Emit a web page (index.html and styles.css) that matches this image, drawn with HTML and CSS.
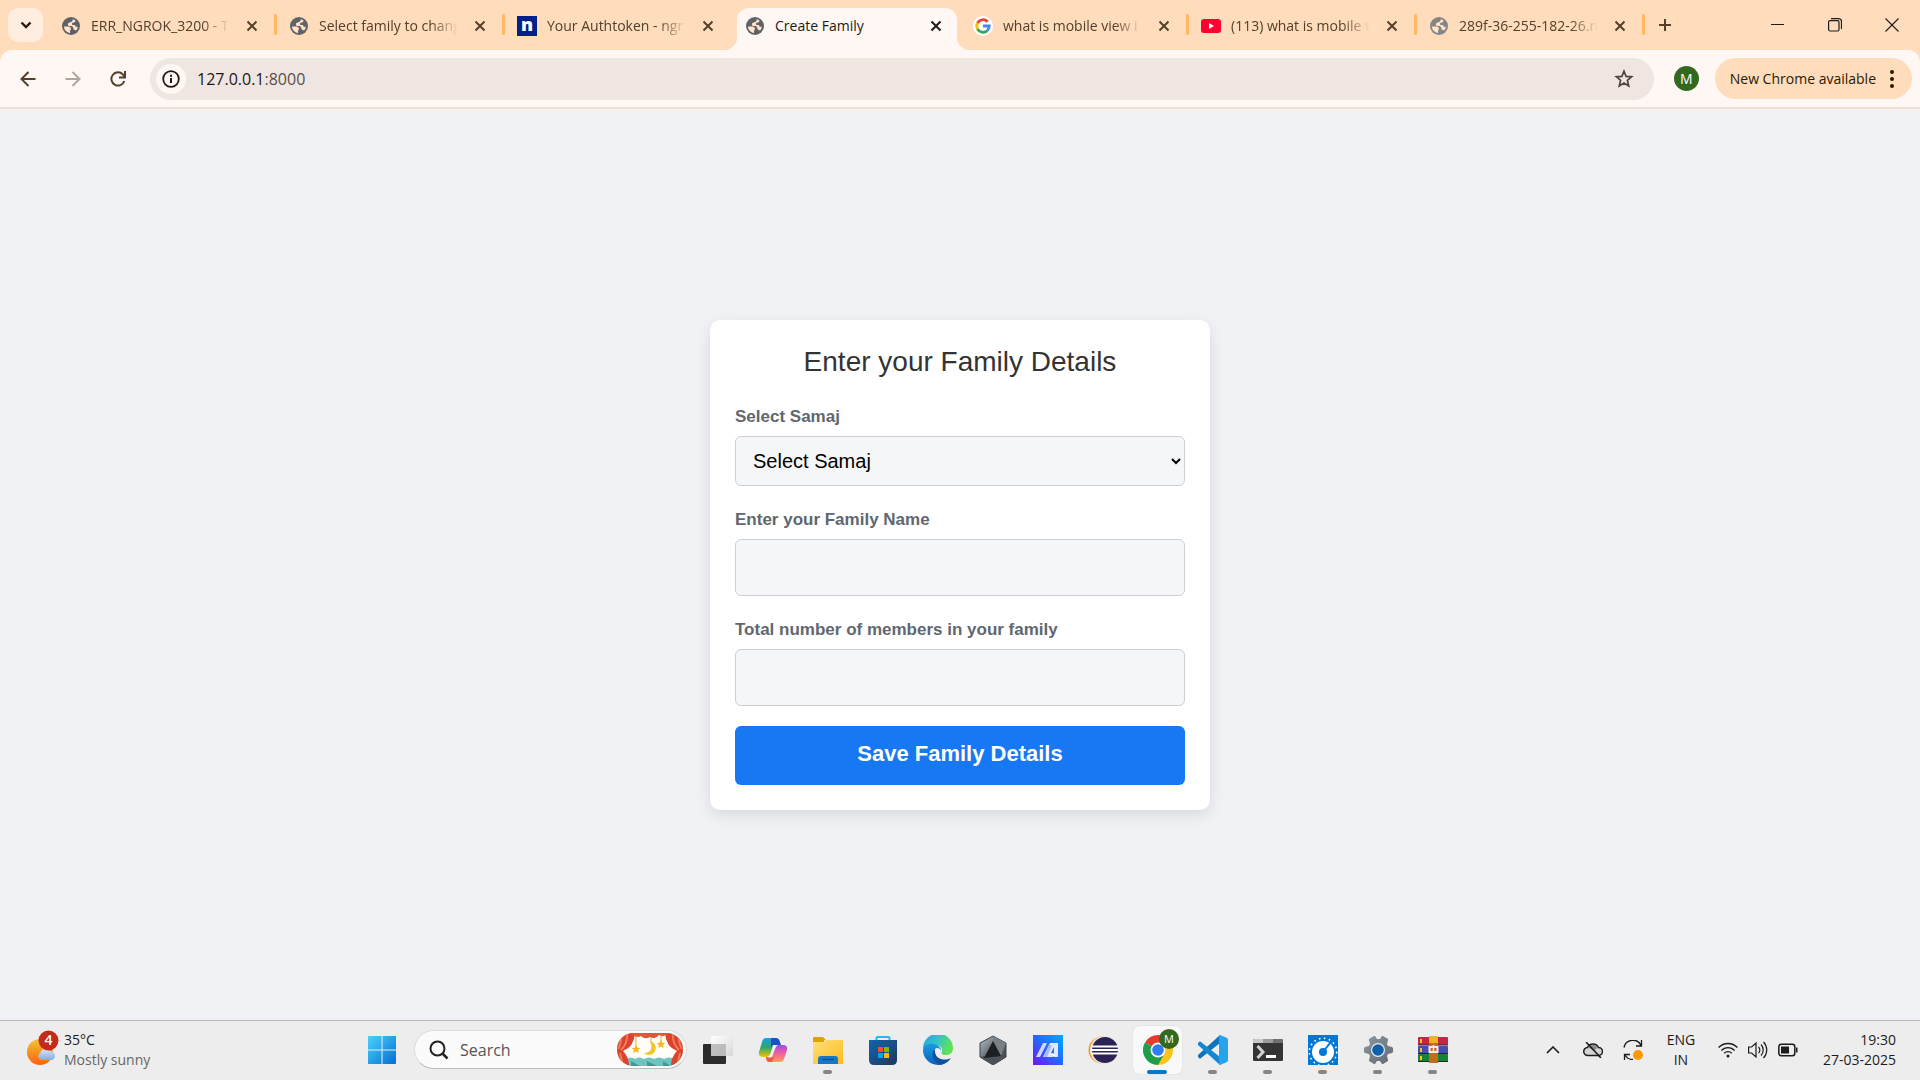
FILE: index.html
```html
<!DOCTYPE html>
<html lang="en">
<head>
<meta charset="utf-8">
<meta name="viewport" content="width=device-width, initial-scale=1">
<title>Create Family</title>
<link rel="stylesheet" href="styles.css">
</head>
<body>
<svg class="defs" aria-hidden="true">
  <defs>
    <symbol id="globe" viewBox="0 0 18 18">
      <circle cx="9" cy="9" r="9" fill="currentColor"/>
      <path class="sea" d="M2 9.6h4.400c1.600 0 2.500 1 2.500 2.400 0 .9-.9 1.200-.9 2.200V16C4.700 15.600 2.100 13 2 9.600zM10.800 2.200c1 .3 1.900.7 2.700 1.400-.2 1.400-1 2.100-2.400 2.100-.9 0-1.100.6-1.100 1.200 0 .8.500 1.200 1.500 1.200 1.600 0 2 .7 2.200 1.700h2.100c-.1 1.300-.5 2.400-1.200 3.300-1.600.2-2.900-.3-3.200-1.700-.3-1.800-1.200-2.300-3-2.300-1.700 0-2.500-.6-2.500-1.700 0-1.300.7-1.800 1.900-2C9.600 5 10.800 4.200 10.800 2.200z"/>
    </symbol>
    <symbol id="x" viewBox="0 0 12 12"><path d="M1.500 1.500l9 9M10.500 1.500l-9 9" fill="none" stroke="currentColor" stroke-width="2"/></symbol>
    <linearGradient id="win" x1="0" y1="0" x2="1" y2="1"><stop offset="0" stop-color="#4fd0fd"/><stop offset="1" stop-color="#0070d2"/></linearGradient>
    <linearGradient id="cpL" x1="0" y1="0" x2="0" y2="1"><stop offset="0" stop-color="#1aa0e8"/><stop offset=".5" stop-color="#2fa66a"/><stop offset="1" stop-color="#f4c400"/></linearGradient>
    <linearGradient id="cpR" x1="0" y1="0" x2="0" y2="1"><stop offset="0" stop-color="#a24be8"/><stop offset=".5" stop-color="#f0609a"/><stop offset="1" stop-color="#fba25a"/></linearGradient>
    <linearGradient id="fold" x1="0" y1="0" x2="1" y2="1"><stop offset="0" stop-color="#ffe07a"/><stop offset="1" stop-color="#fdbb1e"/></linearGradient>
    <linearGradient id="store" x1="0" y1="0" x2="1" y2="1"><stop offset="0" stop-color="#0f66ae"/><stop offset="1" stop-color="#22355f"/></linearGradient>
    <linearGradient id="edgeA" x1="0" y1="0" x2="1" y2=".4"><stop offset="0" stop-color="#1ba4e0"/><stop offset=".5" stop-color="#2fc4c8"/><stop offset="1" stop-color="#63e05a"/></linearGradient>
    <linearGradient id="edgeB" x1="0" y1="0" x2="0" y2="1"><stop offset="0" stop-color="#1a9be0"/><stop offset="1" stop-color="#0b60bd"/></linearGradient>
    <linearGradient id="hex" x1="0" y1="0" x2="1" y2="1"><stop offset="0" stop-color="#b8c2ca"/><stop offset=".5" stop-color="#5d656c"/><stop offset="1" stop-color="#3a3f44"/></linearGradient>
    <linearGradient id="asus" x1="1" y1="0" x2="0" y2="1"><stop offset="0" stop-color="#05a8ff"/><stop offset=".5" stop-color="#2567ff"/><stop offset="1" stop-color="#7313f5"/></linearGradient>
    <linearGradient id="sun" x1="0" y1="0" x2="0" y2="1"><stop offset="0" stop-color="#f3c433"/><stop offset="1" stop-color="#f5630f"/></linearGradient>
    <linearGradient id="cloud" x1="0" y1="0" x2="0" y2="1"><stop offset="0" stop-color="#d8e8fb"/><stop offset="1" stop-color="#86abe6"/></linearGradient>
    <linearGradient id="gearG" x1="0" y1="0" x2="1" y2="1"><stop offset="0" stop-color="#8d979f"/><stop offset="1" stop-color="#616a72"/></linearGradient>
    <linearGradient id="pane" x1="0" y1="0" x2="1" y2="1"><stop offset="0" stop-color="#fff"/><stop offset="1" stop-color="#d8d8d8"/></linearGradient>
    <clipPath id="pill"><rect width="66" height="33" rx="16"/></clipPath>
  </defs>
</svg>

<header class="browser">
  <div class="tabstrip">
    <button class="tab-search" aria-label="Search tabs"><svg width="12" height="8" viewBox="0 0 12 8"><path d="M1.500 1.500L6 6l4.500-4.500" fill="none" stroke="currentColor" stroke-width="2.400"/></svg></button>
    <nav class="tabs">
      <div class="tab"><span class="fav"><svg width="18" height="18"><use href="#globe"/></svg></span><a href="#" class="tab-title">ERR_NGROK_3200 - T</a><button class="tab-close" aria-label="Close"><svg width="12" height="12"><use href="#x"/></svg></button></div>
      <div class="tab"><span class="fav"><svg width="18" height="18"><use href="#globe"/></svg></span><a href="#" class="tab-title">Select family to chang</a><button class="tab-close" aria-label="Close"><svg width="12" height="12"><use href="#x"/></svg></button></div>
      <div class="tab no-line"><span class="fav fav-n">n</span><a href="#" class="tab-title">Your Authtoken - ngr</a><button class="tab-close" aria-label="Close"><svg width="12" height="12"><use href="#x"/></svg></button></div>
      <div class="tab active"><span class="fav"><svg width="18" height="18"><use href="#globe"/></svg></span><a href="#" class="tab-title">Create Family</a><button class="tab-close" aria-label="Close"><svg width="12" height="12"><use href="#x"/></svg></button></div>
      <div class="tab"><span class="fav"><svg width="20" height="20" viewBox="0 0 20 20"><circle cx="10" cy="10" r="10" fill="#fff"/><g fill="none" stroke-width="2.800"><path d="M14.600 5.700A6.300 6.300 0 0 0 4.500 7" stroke="#ea4335"/><path d="M4.500 7a6.300 6.300 0 0 0 0 6" stroke="#fbbc05"/><path d="M4.500 13a6.300 6.300 0 0 0 9.800 1.600" stroke="#34a853"/><path d="M14.300 14.600A6.300 6.300 0 0 0 16.200 10H10" stroke="#4285f4"/></g></svg></span><a href="#" class="tab-title">what is mobile view i</a><button class="tab-close" aria-label="Close"><svg width="12" height="12"><use href="#x"/></svg></button></div>
      <div class="tab"><span class="fav"><svg width="20" height="14" viewBox="0 0 20 14"><rect width="20" height="14" rx="3" fill="#ff0033"/><path d="M8 4l5 3-5 3z" fill="#fff"/></svg></span><a href="#" class="tab-title">(113) what is mobile v</a><button class="tab-close" aria-label="Close"><svg width="12" height="12"><use href="#x"/></svg></button></div>
      <div class="tab"><span class="fav faded"><svg width="18" height="18"><use href="#globe"/></svg></span><a href="#" class="tab-title">289f-36-255-182-26.n</a><button class="tab-close" aria-label="Close"><svg width="12" height="12"><use href="#x"/></svg></button></div>
    </nav>
    <button class="new-tab" aria-label="New tab"><svg width="14" height="14" viewBox="0 0 14 14"><path d="M7 1v12M1 7h12" stroke="currentColor" stroke-width="2"/></svg></button>
    <div class="window-controls">
      <button aria-label="Minimize"><svg width="14" height="14" viewBox="0 0 14 14"><path d="M0 6.500h13" stroke="currentColor"/></svg></button>
      <button aria-label="Restore"><svg width="14" height="14" viewBox="0 0 14 14" fill="none" stroke="currentColor" stroke-width="1.200"><rect x=".6" y="2.600" width="10.400" height="10.400" rx="1.500"/><path d="M3 .6h7.500a3 3 0 0 1 3 3V11"/></svg></button>
      <button aria-label="Close window"><svg width="14" height="14" viewBox="0 0 14 14"><path d="M.5.5l13 13M13.500.5l-13 13" stroke="currentColor" stroke-width="1.100"/></svg></button>
    </div>
  </div>

  <div class="toolbar">
    <button class="nav-btn" aria-label="Back"><svg width="16" height="16" viewBox="0 0 16 16"><path d="M15.500 8H2M8.500 1L1.500 8l7 7" fill="none" stroke="currentColor" stroke-width="2"/></svg></button>
    <button class="nav-btn dim" aria-label="Forward"><svg width="16" height="16" viewBox="0 0 16 16"><path d="M.5 8H14M7.500 1l7 7-7 7" fill="none" stroke="currentColor" stroke-width="2"/></svg></button>
    <button class="nav-btn" aria-label="Reload"><svg width="16" height="16" viewBox="0 0 16 16"><path d="M14.300 10A6.600 6.600 0 1 1 12.800 3.400L14.500 5.500" fill="none" stroke="currentColor" stroke-width="2"/><path d="M15 0v6.500H9" fill="none" stroke="currentColor" stroke-width="2"/></svg></button>
    <div class="omnibox">
      <button class="site-info" aria-label="Site information"><svg width="18" height="18" viewBox="0 0 18 18"><circle cx="9" cy="9" r="7.800" fill="none" stroke="currentColor" stroke-width="1.800"/><path d="M9 8v5M9 4.800v2" stroke="currentColor" stroke-width="2"/></svg></button>
      <a class="url" href="#">127.0.0.1<span class="port">:8000</span></a>
      <button class="star" aria-label="Bookmark"><svg width="20" height="20" viewBox="0 0 20 20"><path d="M10 2.200l2.100 5.200 5.500.4-4.200 3.600 1.300 5.500L10 14l-4.700 2.900 1.300-5.500-4.200-3.600 5.500-.4z" fill="none" stroke="currentColor" stroke-width="1.700"/></svg></button>
    </div>
    <button class="avatar" aria-label="Profile">M</button>
    <button class="update">New Chrome available<svg width="4" height="18" viewBox="0 0 4 18" fill="currentColor"><circle cx="2" cy="2" r="2"/><circle cx="2" cy="9" r="2"/><circle cx="2" cy="16" r="2"/></svg></button>
  </div>
</header>

<main class="page">
  <form class="card">
    <h1>Enter your Family Details</h1>
    <label for="samaj">Select Samaj</label>
    <select id="samaj"><option>Select Samaj</option></select>
    <label for="family">Enter your Family Name</label>
    <input id="family" type="text">
    <label for="members">Total number of members in your family</label>
    <input id="members" type="text">
    <button class="save" type="button">Save Family Details</button>
  </form>
</main>

<footer class="taskbar">
  <button class="weather">
    <svg width="32" height="36" viewBox="0 0 32 36"><circle cx="13" cy="22" r="13" fill="url(#sun)"/><path d="M14 30a4 4 0 0 1-.3-7.500 5 5 0 0 1 9.300-1.200 4.500 4.500 0 0 1 2 8.700z" fill="url(#cloud)"/><circle cx="21.500" cy="10.500" r="10" fill="#c42b1c"/><text x="21.500" y="15" text-anchor="middle" class="badge-text">4</text></svg>
    <span class="weather-text"><span>35°C</span><span class="muted">Mostly sunny</span></span>
  </button>

  <div class="apps">
    <button class="app" aria-label="Start"><svg width="30" height="30" viewBox="0 0 30 30" fill="url(#win)"><path d="M2 1h27v27a1 1 0 0 1-1 1H1V2a1 1 0 0 1 1-1z"/><path d="M15 0v30M0 15h30" stroke="#ededed"/></svg></button>
    <label class="search">
      <svg width="20" height="20" viewBox="0 0 20 20"><circle cx="8.500" cy="8.500" r="7" fill="none" stroke="#222" stroke-width="2"/><path d="M13.500 13.500l5 5" stroke="#222" stroke-width="2.500"/></svg>
      <input type="text" placeholder="Search" aria-label="Search">
      <svg width="66" height="33" viewBox="0 0 66 33"><g clip-path="url(#pill)"><rect width="66" height="33" fill="#fffdf8"/><path d="M10 26q4-3 8 0 4-3 9 0 5-3 10 0 5-3 10 0 5-3 11 0v8H10z" fill="#6fc4bd"/><path d="M14 28l9 5h-9zM30 28l10 5H30zM46 28l8 5h-8z" fill="#3d9b99"/><path d="M0 0h18Q17 14 6 18q6 6 6 15H0zM66 0H48q1 14 12 18-6 6-6 15h12z" fill="#d9432f"/><path d="M4 0Q5 10 1 16M10 0Q11 10 4 17M3 20l3 13M62 0q-1 10 3 16M56 0q-1 10 6 17M63 20l-3 13" fill="none" stroke="#f37a58" stroke-width="2"/><path d="M14 0h38q-5 5-10 2-4 5-9 2-5 3-9-1-5 3-10-3z" fill="#e5553a"/><path d="M19 3v13M34 4v6M44 3v8" stroke="#e0b040"/><path d="M33 8a7 7 0 1 1-6 12c8 0 9-6 6-12z" fill="#f6c324"/><path d="M19 12l1.300 2.700 3 .4-2.200 2 .6 3-2.700-1.500-2.700 1.500.6-3-2.200-2 3-.4zM44 7l1.300 2.700 3 .4-2.200 2 .6 3-2.700-1.500-2.700 1.500.6-3-2.200-2 3-.4z" fill="#f6b91d"/></g></svg>
    </label>
    <button class="app" aria-label="Task view"><svg width="30" height="30" viewBox="0 0 30 30"><rect y="9" width="23" height="20" rx="1" fill="#2c2c2c"/><rect x="8" y="1" width="22" height="20" rx="1" fill="url(#pane)"/><path d="M8 9h15v12H8z" fill="#a9a9a9" opacity=".7"/></svg></button>
    <button class="app" aria-label="Copilot"><svg width="30" height="30" viewBox="0 0 30 30"><path d="M8 3h11l-5 14q-1 5-5 5H5q-5 0-4-5L4 7q1-4 4-4z" fill="url(#cpL)"/><path d="M13 3h5q3 0 4 4l1 3h-6q-3 0-4 3z" fill="#1e50c8"/><path d="M20 10h5q5 0 4 5l-3 9q-1 3-4 3H11l5-13q1-4 4-4z" fill="url(#cpR)"/><path d="M8 22h8l-2 5h-3q-3 0-3-5z" fill="#ee5a42"/><path d="M15 10h5q-2 1-3 4l-3 8q-2 1-5 0 3-1 4-5z" fill="#f0eff2"/></svg></button>
    <button class="app running" aria-label="File Explorer"><svg width="30" height="30" viewBox="0 0 30 30"><path d="M0 3q0-1 1-1h9l3 3h-2v3H0z" fill="#e0a000"/><path d="M0 7h10l3-2h17v24H0z" fill="url(#fold)"/><path d="M5 29v-5q0-3 3-3h14q3 0 3 3v5z" fill="#1878c8"/><path d="M9 24.500h12" stroke="#0c4f96" stroke-width="1.500"/></svg></button>
    <button class="app" aria-label="Store"><svg width="30" height="30" viewBox="0 0 30 30"><path d="M8.500 7V3q0-1 1-1h11q1 0 1 1v4" fill="none" stroke="#27b8f2" stroke-width="2"/><path d="M1 5h28v20q0 5-5 5H6q-5 0-5-5z" fill="url(#store)"/><path d="M10 12h5v5h-5z" fill="#f25022"/><path d="M16 12h5v5h-5z" fill="#7fba00"/><path d="M10 18h5v5h-5z" fill="#00a4ef"/><path d="M16 18h5v5h-5z" fill="#ffb900"/></svg></button>
    <button class="app" aria-label="Edge"><svg width="30" height="30" viewBox="0 0 30 30"><path d="M0 14A15 15 0 0 1 30 13c0 5-3 7-7 7-3 0-5-1-4.500-2.500 1.500-2 .5-7-5.500-7.500C7 9 1 11 0 14z" fill="url(#edgeA)"/><path d="M0 15C0 10 6 8 11 9c5 1 7 4 7 7-1-3-4-4-6-2-4 5 1 13 8 12 3 0 5-1 7-2-3 4-7 6-12 6A15 15 0 0 1 0 15z" fill="url(#edgeB)"/><path d="M11.500 14C7 20 11 28 18 29.700 22 29 26 26 28 23c-6 3-15 2-16-6 0-1 0-2-.5-3z" fill="#11519c"/></svg></button>
    <button class="app" aria-label="Armoury"><svg width="30" height="30" viewBox="0 0 30 30"><path d="M15 1l13 7v14l-13 8-13-8V8z" fill="url(#hex)" stroke="#3c4246"/><path d="M2 22l4-1 17 0 5 1-13 8z" fill="#4c5257"/><path d="M15 6l8 15 5-13-13-7z" fill="#787f85"/><path d="M15 6l8 15-17 2z" fill="#1d2023"/></svg></button>
    <button class="app" aria-label="MyASUS"><svg width="30" height="30" viewBox="0 0 30 30"><path d="M0 0h30v30H0z" fill="url(#asus)"/><path d="M3 22l7-14h4L7 22z" fill="#cfd9ff"/><path d="M10 22l7-14h8v14h-4V12l-3 6h2v4z" fill="#f2f5ff" opacity=".9"/><path d="M10 22l6-12h3l-5 12z" fill="#aab8ff"/><circle cx="20.500" cy="20" r="1.500" fill="#fff"/></svg></button>
    <button class="app" aria-label="Eclipse"><svg width="30" height="30" viewBox="0 0 30 30"><circle cx="14" cy="15" r="13.500" fill="#f7941e"/><circle cx="16" cy="15" r="14" fill="#f3e7d8"/><circle cx="17" cy="15" r="13" fill="#2c2255"/><path d="M4 11.500h26M3 15h27M4 18.500h26" stroke="#fff" stroke-width="1.800"/></svg></button>
    <button class="app current" aria-label="Chrome"><svg width="36" height="36" viewBox="0 0 36 36"><path d="M15 21L2 13.500A15 15 0 0 1 28 13.500z" fill="#e33b2e"/><path d="M15 21L28 13.500A15 15 0 0 1 15 36z" fill="#fcc31e"/><path d="M15 21l5 6.500-5 8.500A15 15 0 0 1 2 13.500z" fill="#1e9e4a"/><circle cx="15" cy="21" r="7.500" fill="#fff"/><circle cx="15" cy="21" r="5.800" fill="#2f7cf0"/><circle cx="26" cy="10" r="10" fill="#33691e"/><text x="26" y="14" text-anchor="middle" class="badge-m">M</text></svg></button>
    <button class="app running" aria-label="VS Code"><svg width="30" height="30" viewBox="0 0 30 30"><path d="M22 0v8L3 23q-1 1-2 0l-1-1q-1-1 0-2z" fill="#0d74bd"/><path d="M22 30v-8L3 7Q2 6 1 7L0 8q-1 1 0 2z" fill="#1587d2"/><path d="M22 0l7 3q1 .500 1 2v20q0 1.500-1 2l-7 3q-1 0-1-2V2q0-2 1-2z" fill="#27a3ee"/></svg></button>
    <button class="app running" aria-label="Terminal"><svg width="30" height="30" viewBox="0 0 30 30"><rect y="4" width="30" height="22" rx="1.500" fill="#343434"/><path d="M0 8V5.500Q0 4 1.500 4H10v4z" fill="#c9c9c9"/><path d="M10 4h10v4H10z" fill="#9a9a9a"/><path d="M20 4h8.500Q30 4 30 5.500V8H20z" fill="#707070"/><path d="M4.500 11l5.500 6-5.500 6" fill="none" stroke="#d2d2d2" stroke-width="3"/><path d="M13 21.500h10" stroke="#fff" stroke-width="3"/></svg></button>
    <button class="app running" aria-label="Gauge"><svg width="30" height="30" viewBox="0 0 30 30"><path d="M0 0h30v30H0z" fill="#0078d7"/><circle cx="15" cy="17" r="11" fill="#fff"/><circle cx="15" cy="17" r="4" fill="#0078d7"/><path d="M15 17l7-9" stroke="#0078d7" stroke-width="2"/><circle cx="15" cy="17" r="13.700" fill="none" stroke="#fff" stroke-width="1.600" stroke-dasharray="1.600 3.400"/></svg></button>
    <button class="app running" aria-label="Settings"><svg width="30" height="30" viewBox="0 0 30 30"><path d="M11 1h1l2 3h3l2-3h1l5 3v1l-1 4 1 2 4 1 1 1v4l-1 1-4 1-1 2 1 4v1l-5 3h-1l-2-3h-3l-2 3h-1l-5-3v-1l1-4-1-2-4-1-1-1v-4l1-1 4-1 1-2-1-4V4z" fill="url(#gearG)"/><circle cx="15" cy="15" r="7" fill="#e9edf0"/><circle cx="15" cy="15" r="5.800" fill="#0e5fae"/></svg></button>
    <button class="app running" aria-label="WinRAR"><svg width="30" height="30" viewBox="0 0 30 30"><rect y="2" width="30" height="8" rx="1" fill="#c22748"/><rect y="11" width="30" height="8" rx="1" fill="#474bb5"/><rect y="19" width="30" height="8" rx="1" fill="#158535"/><path d="M0 10h30M0 18.500h30M0 26.500h30" stroke="#272333"/><path d="M3 4v4M3 13v4M3 21v4" stroke="#f3c52b" stroke-width="2"/><path d="M11 1h9v27h-9z" fill="#c66b1b"/><path d="M11 1h9v7h-9z" fill="#eab52c"/><path d="M11.500 12h8v5h-8z" fill="none" stroke="#eee" stroke-width="2"/><path d="M15.500 10v6" stroke="#eee" stroke-width="1.500"/></svg></button>
  </div>

  <div class="tray">
    <button class="tray-btn" aria-label="Hidden icons"><svg width="14" height="8" viewBox="0 0 14 8"><path d="M1 7l6-6 6 6" fill="none" stroke="currentColor" stroke-width="1.600"/></svg></button>
    <button class="tray-btn" aria-label="OneDrive"><svg width="20" height="16" viewBox="0 0 20 16"><path d="M5 13.500a4 4 0 0 1-.5-8 6 6 0 0 1 11 0 4 4 0 0 1 0 8z" fill="#d4d4d4" stroke="#1c1c1c" stroke-width="1.500"/><path d="M5 5.500a6 6 0 0 1 10 0l-4 3z" fill="#8a8a8a"/><path d="M3 0l15 16" stroke="#1c1c1c" stroke-width="1.600"/></svg></button>
    <button class="tray-btn" aria-label="Update"><svg width="20" height="20" viewBox="0 0 20 20"><path d="M1 7.500A9 9 0 0 1 18 5.500M18.500 0v6H13M1.500 20v-5.500H7M2 15a9 9 0 0 0 8 4.500" fill="none" stroke="#1c1c1c" stroke-width="1.300"/><circle cx="15" cy="15" r="5" fill="#ff9800"/></svg></button>
    <button class="lang">ENG<br>IN</button>
    <button class="status" aria-label="Network, volume and battery">
      <svg width="20" height="16" viewBox="0 0 20 16" fill="none" stroke="currentColor" stroke-width="1.300"><path d="M.6 5.500a13 13 0 0 1 18.800 0M3.400 8.500a9 9 0 0 1 13.200 0M6.200 11.300a5.300 5.300 0 0 1 7.600 0"/><circle cx="10" cy="14" r="1.500" fill="currentColor" stroke="none"/></svg>
      <svg width="20" height="18" viewBox="0 0 20 18" fill="none" stroke="currentColor" stroke-width="1.200"><path d="M.6 6h3L8 2v14l-4.400-4h-3zM10.500 6a4 4 0 0 1 0 6M13 3.500a8 8 0 0 1 0 11M15.500 1a11.500 11.500 0 0 1 0 16"/></svg>
      <svg width="20" height="14" viewBox="0 0 20 14"><rect x=".8" y="1.300" width="16" height="11.400" rx="2.500" fill="none" stroke="currentColor" stroke-width="1.500"/><path d="M3 3.500h8v7H3zM18 4.500h1.500v5H18z" fill="currentColor"/></svg>
    </button>
    <button class="clock">19:30<br>27-03-2025</button>
  </div>
</footer>
</body>
</html>
```
FILE: styles.css
```css
* { box-sizing: border-box; }

body {
  margin: 0;
  min-height: 100vh;
  display: flex;
  flex-direction: column;
  background: #f0f2f5;
  font-family: "Open Sans", "Noto Sans", sans-serif;
  font-size: 14px;
  color: #1c1c1c;
}

button {
  border: 0;
  padding: 0;
  background: none;
  color: inherit;
  font: inherit;
}

a { color: inherit; text-decoration: none; }
svg { display: block; flex: none; }
.defs { position: absolute; width: 0; height: 0; }

/* Browser window */
.browser { background: #ffdcbc; }

.tabstrip {
  display: flex;
  align-items: center;
  height: 50px;
  padding-left: 8px;
  color: #52402b;
}

.tab-search {
  display: grid;
  place-items: center;
  width: 35px;
  height: 34px;
  margin-right: 6px;
  border-radius: 10px;
  background: #ffede0;
  color: #261a0d;
}

.tabs {
  display: flex;
  flex: 0 1 1596px;
  min-width: 0;
  align-self: stretch;
}

.tab {
  position: relative;
  display: flex;
  align-items: center;
  gap: 10px;
  flex: 1 1 0;
  min-width: 0;
  padding: 1px 13px 0 12px;
}

.tab:not(.active, .no-line)::after {
  content: "";
  position: absolute;
  right: 0;
  top: 14px;
  width: 3px;
  height: 21px;
  border-radius: 2px;
  background: #ffb965;
}

.fav {
  display: grid;
  place-items: center;
  flex: none;
  width: 20px;
  height: 20px;
  color: #5f6368;
}

.faded { color: #858585; }
.sea { fill: #ffe3ca; }

.fav-n {
  background: #02208c;
  color: #fff;
  font-size: 18px;
  line-height: 16px;
  font-weight: 800;
  align-items: start;
}

.tab-title {
  flex: 1;
  min-width: 0;
  overflow: hidden;
  white-space: nowrap;
  line-height: 20px;
  mask-image: linear-gradient(to right, #000 80%, transparent);
}

.tab-close {
  display: grid;
  place-items: center;
  width: 24px;
  height: 24px;
}

.active { color: #211a14; z-index: 1; }
.active .tab-title { mask-image: none; }
.active > * { z-index: 1; }

.active::before {
  content: "";
  position: absolute;
  inset: 8px 4px 0;
  border-radius: 12px 12px 0 0;
  background: #fff7f3;
}

.active::after {
  content: "";
  position: absolute;
  left: -10px;
  right: -10px;
  bottom: 0;
  height: 14px;
  background:
    radial-gradient(circle at 0 0, transparent 14px, #fff7f3 15px) left / 14px 14px no-repeat,
    radial-gradient(circle at 14px 0, transparent 14px, #fff7f3 15px) right / 14px 14px no-repeat;
}

.new-tab {
  display: grid;
  place-items: center;
  width: 40px;
  height: 34px;
}

.window-controls {
  display: flex;
  align-self: stretch;
  margin-left: auto;
  color: #1c1c1c;
}

.window-controls button {
  display: grid;
  place-items: center;
  width: 57px;
}

.toolbar {
  display: flex;
  align-items: center;
  height: 59px;
  padding: 0 8px 0 5px;
  border-bottom: 2px solid #f5dfd1;
  border-radius: 12px 12px 0 0;
  background: #fff7f3;
  color: #52402b;
}

.nav-btn {
  display: grid;
  place-items: center;
  width: 45px;
  height: 42px;
}

.dim { color: #b0a59f; }

.omnibox {
  display: flex;
  align-items: center;
  flex: 1;
  min-width: 0;
  height: 42px;
  margin-left: 10px;
  padding: 0 20px 0 6px;
  border-radius: 21px;
  background: #efe6e1;
}

.site-info {
  display: grid;
  place-items: center;
  width: 30px;
  height: 30px;
  border-radius: 50%;
  background: #fff7f3;
  color: #211a14;
}

.url {
  flex: 1;
  padding-left: 11px;
  font-size: 16px;
  color: #1c1814;
}

.port { color: #5a4e48; }
.star { color: #4c4340; }

.avatar {
  width: 25px;
  height: 25px;
  margin: 0 16px 0 20px;
  border-radius: 50%;
  background: #33691e;
  color: #fff;
  line-height: 25px;
}

.update {
  display: flex;
  align-items: center;
  justify-content: space-between;
  gap: 14px;
  height: 41px;
  padding: 0 18px 0 15px;
  border-radius: 21px;
  background: #ffdcbc;
  color: #2c1900;
}

/* Page */
.page {
  flex: 1;
  display: grid;
  place-items: center;
  padding: 24px;
  font-family: "Liberation Sans", Arial, sans-serif;
}

.card {
  display: flex;
  flex-direction: column;
  width: 100%;
  max-width: 500px;
  padding: 25px;
  border-radius: 10px;
  background: #fff;
  box-shadow: 0 5px 15px rgba(0, 0, 0, 0.1);
}

.card h1 {
  margin: 0 0 25px;
  font-size: 28px;
  line-height: 33px;
  font-weight: 400;
  text-align: center;
  color: #333;
}

.card label {
  margin-bottom: 5px;
  font-size: 17px;
  line-height: 28px;
  font-weight: 700;
  color: #606770;
}

.card select,
.card input {
  width: 100%;
  height: 57px;
  margin-bottom: 20px;
  padding: 0 13px;
  border: 1px solid #ccd0d5;
  border-radius: 6px;
  background: #f5f6f7;
  color: #000;
  font: inherit;
  font-size: 20px;
}

.card select {
  height: 50px;
  padding-right: 0;
}

.save {
  height: 59px;
  border-radius: 6px;
  background: #1877f2;
  color: #fff;
  font-size: 22px;
  font-weight: 700;
  padding-bottom: 3px;
}

/* Taskbar */
.taskbar {
  display: grid;
  grid-template-columns: 354px 1fr auto;
  align-items: center;
  height: 60px;
  padding-bottom: 2px;
  border-top: 1px solid #b8b9be;
  background: #ededed;
}

.weather {
  display: flex;
  gap: 5px;
  padding-left: 27px;
  text-align: left;
}

.weather-text { display: grid; line-height: 20px; }
.muted { color: #666; }
.badge-text { fill: #fff; font-size: 14px; font-weight: 600; }
.badge-m { fill: #fff; font-size: 11px; }

.apps { display: flex; align-items: center; }

.app {
  position: relative;
  display: grid;
  place-items: center;
  width: 55px;
  height: 48px;
}

.running::after,
.current::after {
  content: "";
  position: absolute;
  bottom: 0;
  left: 23px;
  width: 9px;
  height: 4px;
  border-radius: 2px;
  background: #858585;
}

.current {
  width: 49px;
  margin: 0 3px;
  border-radius: 6px;
  background: #f9f9f9;
  box-shadow: 0 0 1px #bbb;
}

.current svg { margin: 0 0 6px 6px; }
.current::after { left: 14px; width: 20px; background: #0078d4; }

.search {
  display: flex;
  align-items: center;
  width: 273px;
  height: 39px;
  margin: 0 3px 0 5px;
  padding: 0 3px 0 14px;
  border: 1px solid #dcdcdc;
  border-bottom-color: #bbb;
  border-radius: 20px;
  background: #fbfbfb;
}

.search input {
  flex: 1;
  min-width: 0;
  padding: 0 0 0 11px;
  border: 0;
  background: none;
  font: inherit;
  font-size: 16px;
}

.search input::placeholder { color: #555; }

.tray {
  display: flex;
  align-items: center;
  padding-right: 24px;
  line-height: 20px;
}

.tray-btn {
  display: grid;
  place-items: center;
  width: 40px;
  height: 48px;
}

.lang { width: 56px; }
.status { display: flex; align-items: center; gap: 10px; margin: 0 25px 0 9px; }
.clock { text-align: right; }
```
